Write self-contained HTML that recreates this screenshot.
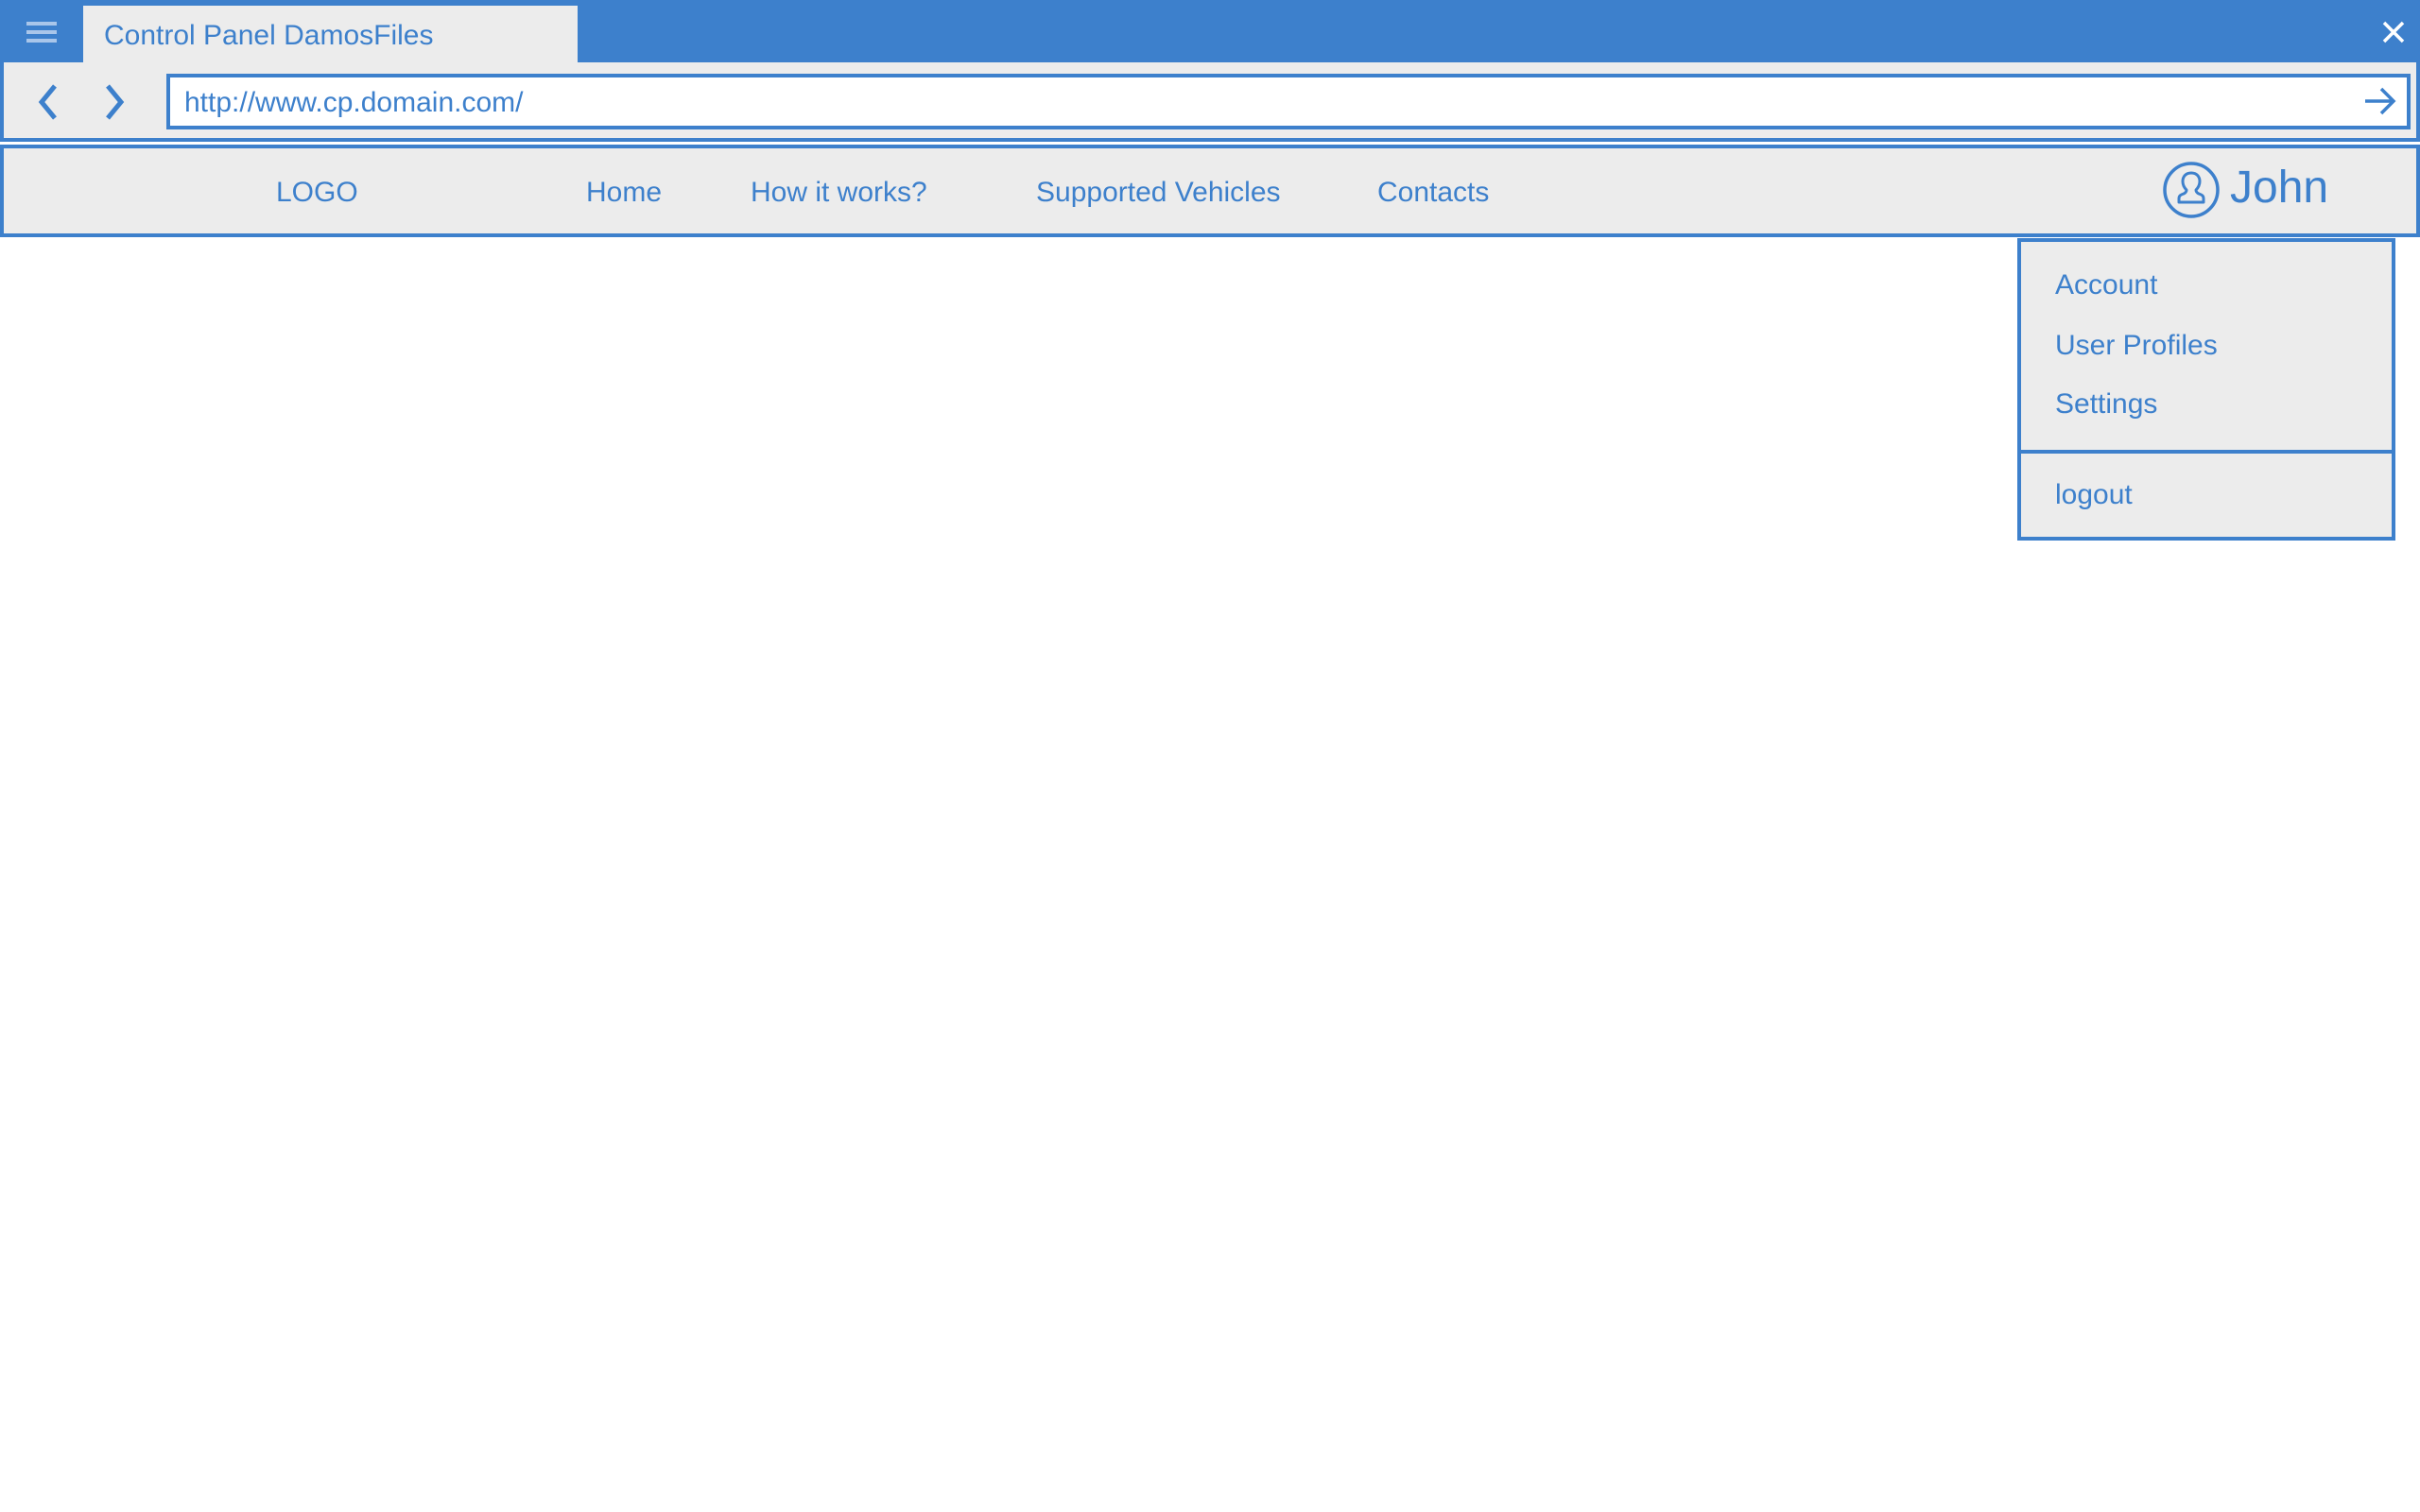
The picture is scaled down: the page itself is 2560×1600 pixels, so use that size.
<!DOCTYPE html>
<html><head><meta charset="utf-8"><style>
*{margin:0;padding:0;box-sizing:border-box}
body{width:2560px;height:1600px;background:#fff;position:relative;overflow:hidden;font-family:"Liberation Sans",Arial,sans-serif;color:#3d80cc}
.a{position:absolute}
.t{position:absolute;white-space:nowrap;line-height:1}
</style></head><body>
<div class="a" style="left:0;top:0;width:2560px;height:66px;background:#3d80cc"></div>
<div class="a" style="left:28px;top:23px;width:32px;height:4px;background:#a9c6ea"></div>
<div class="a" style="left:28px;top:32px;width:32px;height:4px;background:#a9c6ea"></div>
<div class="a" style="left:28px;top:41px;width:32px;height:4px;background:#a9c6ea"></div>
<div class="a" style="left:88px;top:6px;width:523px;height:60px;background:#ececec"></div>
<div class="t" style="left:110px;top:23px;font-size:30px">Control Panel DamosFiles</div>
<svg class="a" style="left:2518px;top:20px" width="28" height="28"><path d="M4 4L24 24M24 4L4 24" stroke="#fff" stroke-width="3.5"/></svg>
<div class="a" style="left:0;top:66px;width:2560px;height:84px;background:#ececec;border:4px solid #3d80cc;border-top:none"></div>
<svg class="a" style="left:36px;top:88px" width="30" height="40"><path d="M22 3L8 20L22 37" stroke="#3d80cc" stroke-width="5" fill="none"/></svg>
<svg class="a" style="left:106px;top:88px" width="30" height="40"><path d="M8 3L22 20L8 37" stroke="#3d80cc" stroke-width="5" fill="none"/></svg>
<div class="a" style="left:176px;top:78px;width:2374px;height:59px;background:#fff;border:4px solid #3d80cc"></div>
<div class="t" style="left:195px;top:94px;font-size:30px">http://www.cp.domain.com/</div>
<svg class="a" style="left:2500px;top:90px" width="36" height="34"><path d="M2 17H32M19 4L32 17L19 30" stroke="#3d80cc" stroke-width="3.5" fill="none"/></svg>
<div class="a" style="left:0;top:153px;width:2560px;height:98px;background:#ececec;border:4px solid #3d80cc"></div>
<div class="t" style="left:292px;top:189px;font-size:30px">LOGO</div>
<div class="t" style="left:620px;top:189px;font-size:30px">Home</div>
<div class="t" style="left:794px;top:189px;font-size:30px">How it works?</div>
<div class="t" style="left:1096px;top:189px;font-size:30px">Supported Vehicles</div>
<div class="t" style="left:1457px;top:189px;font-size:30px">Contacts</div>
<svg class="a" style="left:2286px;top:169px" width="64" height="64"><circle cx="32" cy="32" r="28" stroke="#3d80cc" stroke-width="3.5" fill="none"/><path d="M32 14c-6 0-9 4-9 9c0 4 2 7 4 9c0 2-1 3-3 4c-3 1-5 2-5 5v4h26v-4c0-3-2-4-5-5c-2-1-3-2-3-4c2-2 4-5 4-9c0-5-3-9-9-9z" stroke="#3d80cc" stroke-width="3" fill="none" stroke-linejoin="round"/></svg>
<div class="t" style="left:2359px;top:175px;font-size:48px">John</div>
<div class="a" style="left:2134px;top:252px;width:400px;height:320px;background:#ececec;border:4px solid #3d80cc"></div>
<div class="a" style="left:2134px;top:476px;width:400px;height:4px;background:#3d80cc"></div>
<div class="t" style="left:2174px;top:287px;font-size:30px">Account</div>
<div class="t" style="left:2174px;top:351px;font-size:30px">User Profiles</div>
<div class="t" style="left:2174px;top:413px;font-size:30px">Settings</div>
<div class="t" style="left:2174px;top:509px;font-size:30px">logout</div>
</body></html>
